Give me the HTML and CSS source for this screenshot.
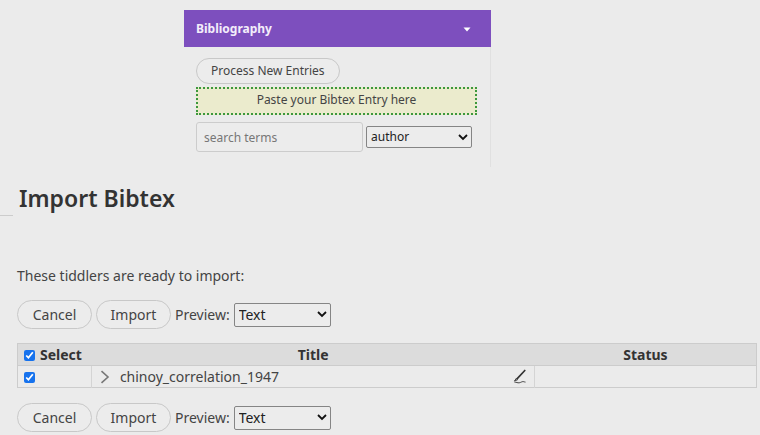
FILE: index.html
```html
<!DOCTYPE html>
<html lang="en">
<head>
<meta charset="utf-8">
<title>Import Bibtex</title>
<link rel="stylesheet" href="styles.css">
</head>
<body>
<section class="panel">
  <header class="panel-head">
    <h2>Bibliography</h2>
    <button class="toggle" type="button" aria-label="Collapse"><svg width="8" height="5" viewBox="0 0 8 5"><path d="M0.5 0.5h7L4 4.5z" fill="#fff"/></svg></button>
  </header>
  <div class="panel-body">
    <button class="pill small" type="button">Process New Entries</button>
    <div class="dropzone">Paste your Bibtex Entry here</div>
    <div class="search">
      <input class="field" type="text" placeholder="search terms" aria-label="Search terms">
      <span class="picker field-picker"><select aria-label="Search field"><option>author</option></select><svg width="10" height="7" viewBox="0 0 10 7"><path d="M1 1l4 4 4-4"/></svg></span>
    </div>
  </div>
</section>
<main class="main">
  <div class="heading"><h1>Import Bibtex</h1></div>
  <p class="intro">These tiddlers are ready to import:</p>
  <div class="actions">
    <button class="pill" type="button">Cancel</button>
    <button class="pill" type="button">Import</button>
    <label for="preview-top">Preview:</label>
    <span class="picker"><select id="preview-top"><option>Text</option></select><svg width="10" height="7" viewBox="0 0 10 7"><path d="M1 1l4 4 4-4"/></svg></span>
  </div>
  <table class="imports">
    <colgroup><col class="col-select"><col class="col-title"><col class="col-status"></colgroup>
    <thead>
      <tr>
        <th><label class="check"><input type="checkbox" checked>Select</label></th>
        <th>Title</th>
        <th>Status</th>
      </tr>
    </thead>
    <tbody>
      <tr>
        <td><label class="check"><input type="checkbox" checked aria-label="Select chinoy_correlation_1947"></label></td>
        <td>
          <div class="entry">
            <svg width="10" height="14" viewBox="0 0 10 14"><path d="M1.5 1.2L8 7l-6.500 5.800" fill="none" stroke="#777" stroke-width="1.600"/></svg>
            <span class="name">chinoy_correlation_1947</span>
            <svg width="14" height="15" viewBox="0 0 14 15"><path d="M11.800 1.500L4 9.800" fill="none" stroke="#333" stroke-width="1.700" stroke-linecap="round"/><path d="M3.600 9L1.400 12.100l3.400-1.500M1.500 13.200c2-.2 3 .9 4.700.6 1.800-.3 2.500-1.300 4-1.200 1 .1 1.300.5 2.300.5" fill="none" stroke="#444"/></svg>
          </div>
        </td>
        <td></td>
      </tr>
    </tbody>
  </table>
  <div class="actions">
    <button class="pill" type="button">Cancel</button>
    <button class="pill" type="button">Import</button>
    <label for="preview-bottom">Preview:</label>
    <span class="picker"><select id="preview-bottom"><option>Text</option></select><svg width="10" height="7" viewBox="0 0 10 7"><path d="M1 1l4 4 4-4"/></svg></span>
  </div>
</main>
</body>
</html>
```
FILE: styles.css
```css
* { box-sizing: border-box; }
body {
  margin: 0;
  padding-top: 10px;
  overflow: hidden;
  background: #ebebeb;
  color: #444;
  font: 14px/20px "Noto Sans", "Open Sans", sans-serif;
}
h1, h2, p { margin: 0; }
button, input, select { font: inherit; color: inherit; }
svg { flex: none; }
.panel {
  width: 307px;
  margin-left: 184px;
  border-right: 1px solid #e0e0e0;
  font-size: 12px;
}
.panel-head {
  display: flex;
  align-items: center;
  justify-content: space-between;
  height: 37px;
  margin-right: -1px;
  padding: 0 20px 0 12px;
  background: #7d4fbe;
  color: #f3edfa;
}
.panel-head h2 { font-size: 12px; font-weight: 700; }
.toggle { display: flex; padding: 2px 0 0; border: 0; background: none; }
.panel-body { padding: 11px 13px 15px 12px; }
.pill {
  min-width: 75px;
  height: 29px;
  padding: 0 12px;
  border: 1px solid #c8c8c8;
  border-radius: 15px;
  background: #ececec;
}
.pill.small { display: block; height: 26px; padding: 0 14px; }
.dropzone {
  height: 28px;
  margin: 3px 0 7px;
  border: 2px dotted #3c983c;
  background: #ebebcd;
  line-height: 22px;
  text-align: center;
}
.search { display: flex; align-items: center; gap: 3px; }
.field {
  width: 167px;
  height: 30px;
  padding: 2px 7px;
  border: 1px solid #ccc;
  border-radius: 3px;
  background: #ececec;
}
.field::placeholder { color: #777; }
.picker { position: relative; width: 97px; color: #222; }
.picker select {
  display: block;
  width: 100%;
  height: 24px;
  padding: 0 4px;
  border: 1px solid #858585;
  border-radius: 2px;
  background: #ececec;
  appearance: none;
}
.picker svg {
  position: absolute;
  top: 8px;
  right: 4px;
  fill: none;
  stroke: #111;
  stroke-width: 1.8;
  pointer-events: none;
}
.field-picker { width: 106px; }
.field-picker select { height: 22px; }
.main { padding: 0 3px 0 17px; }
.heading { position: relative; padding: 13px 0 0 2px; }
.heading::before {
  content: "";
  position: absolute;
  left: -17px;
  bottom: 0;
  width: 13px;
  border-bottom: 1px solid #ccc;
}
h1 { color: #333; font-size: 23px; line-height: 36px; font-weight: 600; }
.intro { margin: 50px 0 14px; }
.actions { display: flex; align-items: center; gap: 4px; }
.imports {
  width: 100%;
  margin: 14px 0 15px;
  border-collapse: collapse;
  table-layout: fixed;
  border: 1px solid #ccc;
}
.col-select { width: 10%; }
.col-status { width: 30%; }
th, td { height: 22px; padding: 0; line-height: 20px; }
th { background: #dcdcdc; color: #333; border-bottom: 1px solid #ccc; }
td + td { border-left: 1px solid #d4d4d4; }
.check { display: flex; align-items: center; gap: 5px; padding-left: 6px; }
.check input { width: 11px; height: 11px; margin: 2px 0 0; accent-color: #1672ed; }
.entry { display: flex; align-items: center; gap: 10px; padding: 0 7px 0 8px; }
.name { flex: 1; }
```
